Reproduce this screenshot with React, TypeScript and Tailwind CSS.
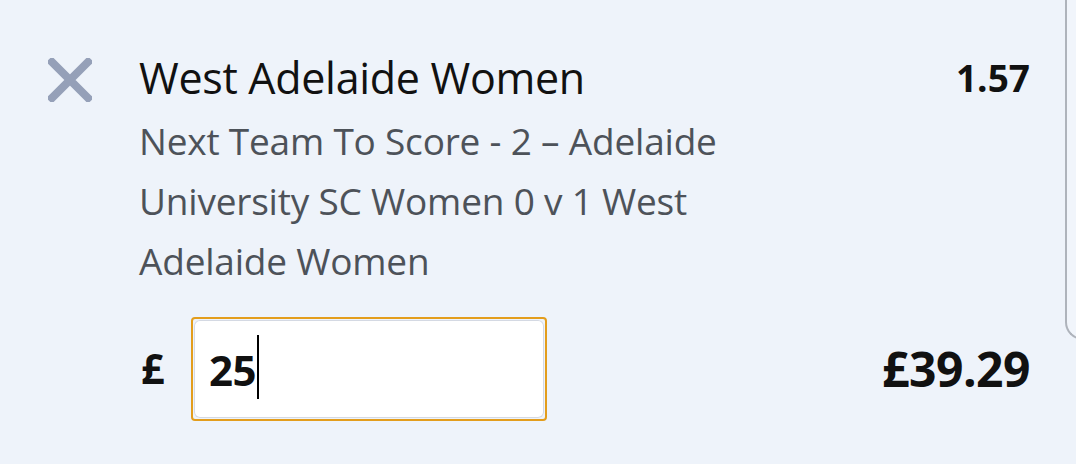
// Carte de pari : sélection + mise
export default function App() {
  return (
    <div className="relative w-[1076px] h-[464px] overflow-hidden bg-[#eef3fa] font-['Open_Sans',sans-serif]">

      {/* bord de la carte suivante, à droite */}
      <div className="absolute left-[1065px] top-[-20px] w-[40px] h-[360px] rounded-l-[18px] border-2 border-r-0 border-[#aeb3bb] bg-[#f1f5fb]" />

      <div className="flex pl-[48px] pr-[46px] pt-[52px]">
        {/* croix */}
        <div className="w-[91px] pt-[6px]">
          <svg width="44" height="44" viewBox="0 0 44 44">
            <path d="M4 4 L40 40 M40 4 L4 40" stroke="#95a0b8" strokeWidth="8" strokeLinecap="square" />
          </svg>
        </div>

        <div className="flex-1 flex flex-col">
          <div className="flex justify-between items-start">
            <div className="text-[43px] leading-[52px] text-[#111] tracking-[-0.3px]">West Adelaide Women</div>
            <div className="text-[37px] leading-[52px] font-bold text-[#111]">1.57</div>
          </div>
          <div className="w-[590px] text-[37px] leading-[60px] text-[#4d5259] tracking-[-0.2px] mt-[7px]">
            Next Team To Score - 2 – Adelaide University SC Women 0 v 1 West Adelaide Women
          </div>

          <div className="flex items-center justify-between mt-[26px] ml-[2px]">
            <div className="flex items-center">
              <span className="text-[41px] font-bold text-[#111] w-[50px]">£</span>
              <div className="w-[356px] h-[104px] rounded-[4px] border-2 border-[#e39d1c] p-[1px]">
                <div className="w-full h-full rounded-[6px] bg-white shadow-[inset_0_0_0_1px_#d4d9e3] flex items-center pl-[15px]">
                  <span className="text-[42px] font-bold text-[#111] tracking-[-0.5px]">25</span>
                  <span className="w-[2px] h-[64px] bg-black ml-[1px] -mt-[4px]" />
                </div>
              </div>
            </div>
            <div className="text-[48px] font-bold text-[#111] tracking-[-0.5px]">£39.29</div>
          </div>
        </div>
      </div>
    </div>
  );
}
